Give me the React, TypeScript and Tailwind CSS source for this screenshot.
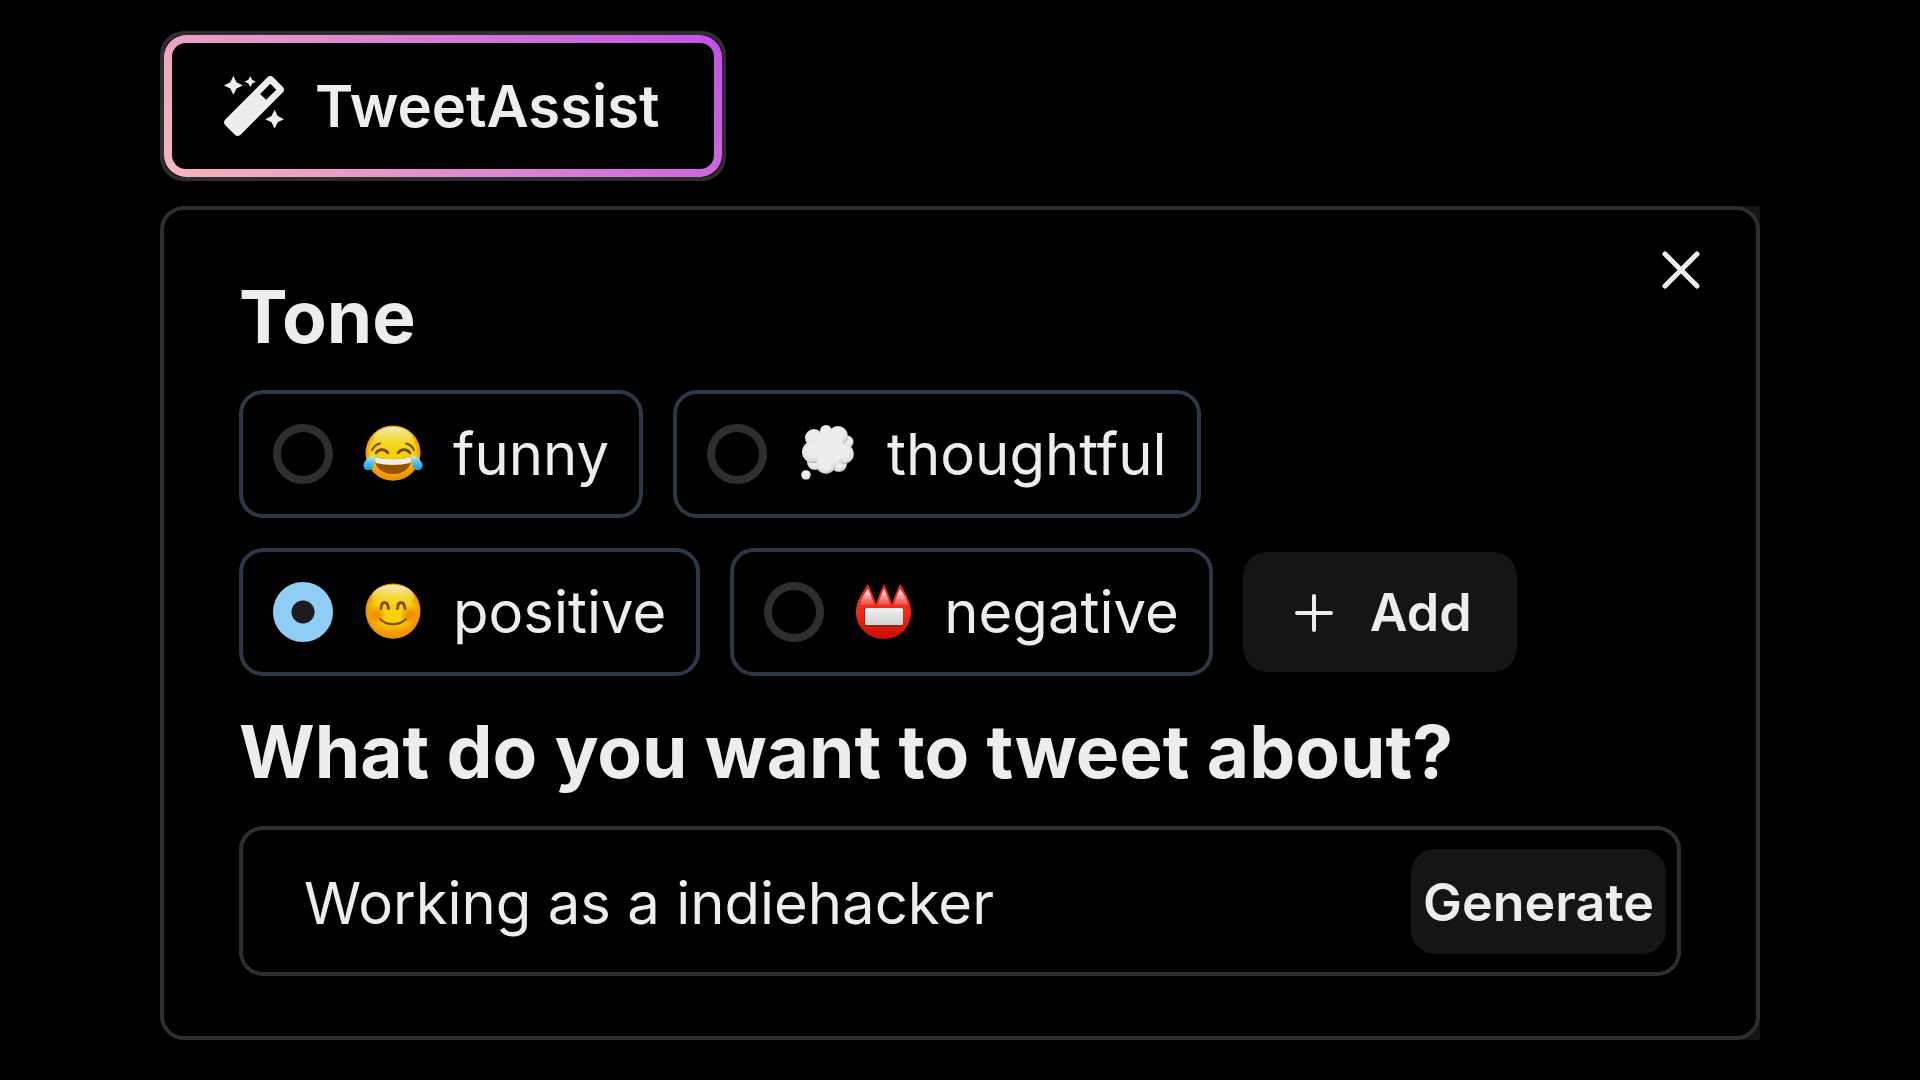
import { useState } from "react";
import type { ReactNode } from "react";
import { FaMagic } from "react-icons/fa";

function JoyEmoji() {
  return (
    <svg viewBox="0 0 60 60" className="size-15 shrink-0" aria-hidden="true">
      <defs>
        <radialGradient id="joyEdge" cx="50%" cy="48%" r="52%">
          <stop offset="0.78" stopColor="#f3d20c" />
          <stop offset="0.9" stopColor="#f2a60a" />
          <stop offset="1" stopColor="#e88405" />
        </radialGradient>
        <linearGradient id="joyShine" x1="0" y1="0" x2="0" y2="1">
          <stop offset="0" stopColor="#f0eccb" />
          <stop offset="1" stopColor="#f3d60c" stopOpacity="0" />
        </linearGradient>
        <linearGradient id="joyShade" x1="0" y1="0" x2="0" y2="1">
          <stop offset="0.55" stopColor="#f09a05" stopOpacity="0" />
          <stop offset="1" stopColor="#f09205" />
        </linearGradient>
        <linearGradient id="joyTear" x1="0" y1="0" x2="0" y2="1">
          <stop offset="0" stopColor="#d5eef8" />
          <stop offset="0.5" stopColor="#56bfec" />
          <stop offset="1" stopColor="#0b9ce3" />
        </linearGradient>
      </defs>
      <circle cx="30" cy="29" r="27.500" fill="url(#joyEdge)" />
      <circle cx="30" cy="29" r="27.500" fill="url(#joyShade)" />
      <ellipse cx="30" cy="16" rx="20" ry="13" fill="url(#joyShine)" />
      <g fill="none" stroke="#7d4304" strokeLinecap="round">
        <path d="M9 26c2-4 5-6 8-6.500M51 26c-2-4-5-6-8-6.500" strokeWidth="1.800" />
        <path d="M13 29c3-4.500 9-4.500 12 0M35 29c3-4.500 9-4.500 12 0" strokeWidth="2.600" />
      </g>
      <path d="M11.500 33c11 3 26 3 37 0 .6 10-7 17-18.500 17S11 43 11.500 33z" fill="#965300" />
      <path d="M11.500 33c11 3 26 3 37 0 0 3-.5 5-1.500 6-10 2.500-24 2.500-34 0-1-1-1.500-3-1.500-6z" fill="#eeeeee" />
      <path d="M11 31c-5 2-10.500 6-10.500 10.500 0 6 8 6.500 9.500 1C11 39 11.500 34 11 31z" fill="url(#joyTear)" />
      <path d="M49 31c5 2 10.500 6 10.500 10.500 0 6-8 6.500-9.500 1C49 39 48.500 34 49 31z" fill="url(#joyTear)" />
    </svg>
  );
}

function ThoughtEmoji() {
  return (
    <svg viewBox="0 0 60 60" className="size-15 shrink-0" aria-hidden="true">
      <defs>
        <radialGradient id="puff" cx="45%" cy="40%" r="60%">
          <stop offset="0.5" stopColor="#ededed" />
          <stop offset="0.85" stopColor="#dcdcdc" />
          <stop offset="1" stopColor="#a8a8a8" />
        </radialGradient>
      </defs>
      <g fill="url(#puff)">
        <circle cx="29" cy="7" r="6" />
        <circle cx="50" cy="18" r="6.500" />
        <circle cx="18" cy="38" r="8" />
        <circle cx="42" cy="40" r="8" />
        <circle cx="17" cy="14" r="9" />
        <circle cx="41" cy="12" r="10" />
        <circle cx="16" cy="28" r="11" />
        <circle cx="47" cy="30" r="10" />
        <circle cx="29" cy="40" r="10" />
      </g>
      <circle cx="31" cy="24" r="16" fill="#ededed" />
      <circle cx="9" cy="51" r="4.800" fill="url(#puff)" />
    </svg>
  );
}

function SmileEmoji() {
  return (
    <svg viewBox="0 0 60 60" className="size-15 shrink-0" aria-hidden="true">
      <defs>
        <radialGradient id="smileEdge" cx="50%" cy="48%" r="52%">
          <stop offset="0.65" stopColor="#f3d20c" />
          <stop offset="0.85" stopColor="#f2a60a" />
          <stop offset="1" stopColor="#e88405" />
        </radialGradient>
        <linearGradient id="smileShine" x1="0" y1="0" x2="0" y2="1">
          <stop offset="0" stopColor="#f2eed2" />
          <stop offset="1" stopColor="#f3d60c" stopOpacity="0" />
        </linearGradient>
        <linearGradient id="smileShade" x1="0" y1="0" x2="0" y2="1">
          <stop offset="0.65" stopColor="#f09a05" stopOpacity="0" />
          <stop offset="1" stopColor="#f09205" />
        </linearGradient>
        <radialGradient id="blush">
          <stop offset="0.3" stopColor="#f29000" />
          <stop offset="1" stopColor="#f29000" stopOpacity="0" />
        </radialGradient>
      </defs>
      <circle cx="30" cy="29" r="27.500" fill="url(#smileEdge)" />
      <circle cx="30" cy="29" r="27.500" fill="url(#smileShade)" />
      <ellipse cx="30" cy="15" rx="21" ry="12" fill="url(#smileShine)" />
      <circle cx="13" cy="33" r="10" fill="url(#blush)" />
      <circle cx="47" cy="33" r="10" fill="url(#blush)" />
      <g fill="none" stroke="#8a4b04" strokeLinecap="round">
        <path d="M18 26.500c.5-8 6.500-8 7.500 0M34.500 26.500c.5-8 6.500-8 7.500 0" strokeWidth="3" />
        <path d="M17 37c7 7 19 7 26 0" strokeWidth="2.200" />
      </g>
    </svg>
  );
}

function NameBadgeEmoji() {
  return (
    <svg viewBox="0 0 60 60" className="size-15 shrink-0" aria-hidden="true">
      <defs>
        <linearGradient id="flame" x1="0" y1="0" x2="0" y2="1">
          <stop offset="0" stopColor="#f5eef4" />
          <stop offset="0.4" stopColor="#f2a9b0" />
          <stop offset="1" stopColor="#f0483a" />
        </linearGradient>
        <linearGradient id="badge" x1="0" y1="0" x2="0" y2="1">
          <stop offset="0" stopColor="#e0281c" />
          <stop offset="0.5" stopColor="#ee2e1c" />
          <stop offset="1" stopColor="#cc0a02" />
        </linearGradient>
        <linearGradient id="plate" x1="0" y1="0" x2="0" y2="1">
          <stop offset="0" stopColor="#f0f0f0" />
          <stop offset="1" stopColor="#d2d2d2" />
        </linearGradient>
      </defs>
      <path d="M14 2c3 6 5 12 8 20C25 13 27 8 30 2c3 6 5 11 8 20 3-9 5-14 8-20 6 9 11 19 11 28 0 16-12 27-27 27S2 46 2 30C2 20 8 11 14 2z" fill="url(#badge)" />
      <path d="M14 7c3 6 4 9 6 16H6c1-6 4-11 8-16zM30 7c3 6 4 9 6 16H24c2-7 3-10 6-16zM46 7c4 5 7 10 8 16H40c2-7 3-10 6-16z" fill="url(#flame)" />
      <rect x="10" y="26" width="39" height="19" rx="1.500" fill="#8a2a14" />
      <rect x="11" y="26" width="38" height="17" rx="1.500" fill="url(#plate)" />
    </svg>
  );
}

const tones: { id: string; emoji: ReactNode }[][] = [
  [
    { id: "funny", emoji: <JoyEmoji /> },
    { id: "thoughtful", emoji: <ThoughtEmoji /> },
  ],
  [
    { id: "positive", emoji: <SmileEmoji /> },
    { id: "negative", emoji: <NameBadgeEmoji /> },
  ],
];

export default function App() {
  const [tone, setTone] = useState("positive");
  const [topic, setTopic] = useState("Working as a indiehacker");

  return (
    <main className="min-h-screen bg-black px-40 pt-[31px] pb-10 font-['Inter',sans-serif] text-[#ededed]">
      <button type="button" className="block rounded-3xl border-4 border-[#2e2e2e] bg-black">
        <span className="block rounded-[22px] bg-[linear-gradient(45deg,#f5b8bc,#c450e8)] p-2">
          <span className="flex h-[126px] items-center gap-[31px] rounded-[14px] bg-black pr-[54px] pl-[52px] text-[58px] font-semibold">
            <FaMagic className="size-15" aria-hidden="true" />
            TweetAssist
          </span>
        </span>
      </button>

      <div className="mt-[25px] bg-linear-to-r from-black from-50% to-[#151515] to-50%">
        <section className="relative rounded-3xl border-4 border-[#2e2e2e] bg-black px-[75px] pt-[62px] pb-[60px]">
          <button type="button" aria-label="Close" className="absolute top-[41px] right-[56px]">
            <svg viewBox="0 0 38 38" className="size-[38px]" fill="none" stroke="currentColor" strokeWidth="5" strokeLinecap="round">
              <path d="M3 3l32 32M35 3l-32 32" />
            </svg>
          </button>

          <h2 className="text-[73px] leading-[90px] font-bold">Tone</h2>

          <div role="radiogroup" aria-label="Tone" className="mt-[28px] flex flex-col gap-[30px]">
            {tones.map((row, index) => (
              <div key={index} className="flex flex-wrap items-center gap-[30px]">
                {row.map(({ id, emoji }) => (
                  <label key={id} className="flex h-32 items-center gap-[30px] rounded-3xl border-4 border-[#2d3748] px-[30px] text-[58px]">
                    <input
                      type="radio"
                      name="tone"
                      value={id}
                      checked={tone === id}
                      onChange={() => setTone(id)}
                      className="size-15 shrink-0 appearance-none rounded-full border-8 border-[#2e2e2e] checked:border-[#90cdf4] checked:bg-[radial-gradient(circle,#1c1c1f_11px,#90cdf4_12px)]"
                    />
                    {emoji}
                    {id}
                  </label>
                ))}
                {index === tones.length - 1 && (
                  <button type="button" className="flex h-30 items-center gap-[37px] rounded-3xl bg-[#151515] pt-[2px] pr-[45px] pl-[52px] text-[52px] font-semibold">
                    <svg viewBox="0 0 38 38" className="size-[38px]" fill="none" stroke="currentColor" strokeWidth="4" strokeLinecap="round" aria-hidden="true">
                      <path d="M19 2v34M2 19h34" />
                    </svg>
                    Add
                  </button>
                )}
              </div>
            ))}
          </div>

          <h2 className="mt-[31px] text-[73px] leading-[90px] font-bold">
            <label htmlFor="topic">What do you want to tweet about?</label>
          </h2>

          <form
            onSubmit={(event) => event.preventDefault()}
            className="mt-[29px] flex h-[150px] items-center rounded-3xl border-4 border-[#2e2e2e] pr-[11px] pl-[61px]"
          >
            <input
              id="topic"
              type="text"
              value={topic}
              onChange={(event) => setTopic(event.target.value)}
              className="min-w-0 flex-1 bg-transparent pt-1 text-[58px] outline-none"
            />
            <button type="submit" className="h-[105px] rounded-3xl bg-[#151515] px-[12px] pt-[3px] text-[52px] font-semibold">
              Generate
            </button>
          </form>
        </section>
      </div>
    </main>
  );
}
